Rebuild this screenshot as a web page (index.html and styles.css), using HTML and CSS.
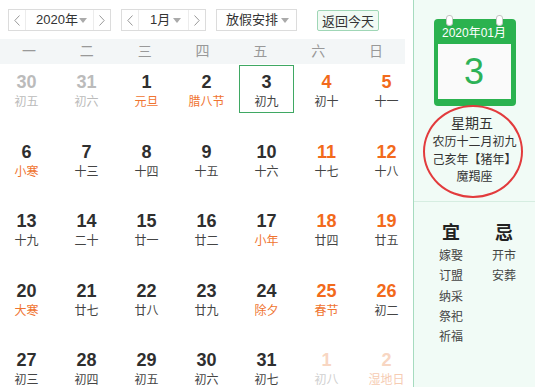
FILE: index.html
```html
<!DOCTYPE html>
<html lang="zh-CN">
<head>
    <meta charset="UTF-8">
    <meta name="viewport" content="width=device-width, initial-scale=1.0">
    <title>万年历</title>
    <link rel="stylesheet" href="styles.css">
</head>
<body>
    <div class="page">
        <div class="main">
            <div class="toolbar">
                <div class="picker year">
                    <span class="arrow prev"><svg width="6" height="11" viewBox="0 0 6 11"><polyline points="5.5,0.5 0.8,5.5 5.5,10.5" fill="none" stroke="#999" stroke-width="1"/></svg></span>
                    <span class="label">2020年<i class="caret"></i></span>
                    <span class="arrow next"><svg width="6" height="11" viewBox="0 0 6 11"><polyline points="0.5,0.5 5.2,5.5 0.5,10.5" fill="none" stroke="#999" stroke-width="1"/></svg></span>
                </div>
                <div class="picker month">
                    <span class="arrow prev"><svg width="6" height="11" viewBox="0 0 6 11"><polyline points="5.5,0.5 0.8,5.5 5.5,10.5" fill="none" stroke="#999" stroke-width="1"/></svg></span>
                    <span class="label">1月<i class="caret"></i></span>
                    <span class="arrow next"><svg width="6" height="11" viewBox="0 0 6 11"><polyline points="0.5,0.5 5.2,5.5 0.5,10.5" fill="none" stroke="#999" stroke-width="1"/></svg></span>
                </div>
                <div class="picker holiday">
                    <span class="label">放假安排<i class="caret"></i></span>
                </div>
                <button class="today-btn">返回今天</button>
            </div>

            <div class="weekdays">
                <span>一</span><span>二</span><span>三</span><span>四</span><span>五</span><span>六</span><span>日</span>
            </div>

            <div class="days">
                <div class="day other"><b>30</b><span>初五</span></div>
                <div class="day other"><b>31</b><span>初六</span></div>
                <div class="day"><b>1</b><span class="fest">元旦</span></div>
                <div class="day"><b>2</b><span class="fest">腊八节</span></div>
                <div class="day today"><b>3</b><span>初九</span></div>
                <div class="day weekend"><b>4</b><span>初十</span></div>
                <div class="day weekend"><b>5</b><span>十一</span></div>

                <div class="day"><b>6</b><span class="fest">小寒</span></div>
                <div class="day"><b>7</b><span>十三</span></div>
                <div class="day"><b>8</b><span>十四</span></div>
                <div class="day"><b>9</b><span>十五</span></div>
                <div class="day"><b>10</b><span>十六</span></div>
                <div class="day weekend"><b>11</b><span>十七</span></div>
                <div class="day weekend"><b>12</b><span>十八</span></div>

                <div class="day"><b>13</b><span>十九</span></div>
                <div class="day"><b>14</b><span>二十</span></div>
                <div class="day"><b>15</b><span>廿一</span></div>
                <div class="day"><b>16</b><span>廿二</span></div>
                <div class="day"><b>17</b><span class="fest">小年</span></div>
                <div class="day weekend"><b>18</b><span>廿四</span></div>
                <div class="day weekend"><b>19</b><span>廿五</span></div>

                <div class="day"><b>20</b><span class="fest">大寒</span></div>
                <div class="day"><b>21</b><span>廿七</span></div>
                <div class="day"><b>22</b><span>廿八</span></div>
                <div class="day"><b>23</b><span>廿九</span></div>
                <div class="day"><b>24</b><span class="fest">除夕</span></div>
                <div class="day weekend"><b>25</b><span class="fest">春节</span></div>
                <div class="day weekend"><b>26</b><span>初二</span></div>

                <div class="day"><b>27</b><span>初三</span></div>
                <div class="day"><b>28</b><span>初四</span></div>
                <div class="day"><b>29</b><span>初五</span></div>
                <div class="day"><b>30</b><span>初六</span></div>
                <div class="day"><b>31</b><span>初七</span></div>
                <div class="day next"><b>1</b><span>初八</span></div>
                <div class="day next"><b>2</b><span class="fest">湿地日</span></div>
            </div>
        </div>

        <aside class="side">
            <div class="cal-card">
                <i class="ring left"></i>
                <i class="ring right"></i>
                <div class="cal-head">2020年01月</div>
                <div class="cal-body">3</div>
            </div>
            <div class="info">
                <div class="week">星期五</div>
                <div>农历十二月初九</div>
                <div>己亥年【猪年】</div>
                <div>魔羯座</div>
            </div>
            <div class="mark"></div>
            <div class="fortune">
                <div class="col">
                    <h3>宜</h3>
                    <p>嫁娶</p>
                    <p>订盟</p>
                    <p>纳采</p>
                    <p>祭祀</p>
                    <p>祈福</p>
                </div>
                <div class="col">
                    <h3>忌</h3>
                    <p>开市</p>
                    <p>安葬</p>
                </div>
            </div>
        </aside>
    </div>
</body>
</html>
```

FILE: styles.css
```css
body {
    margin: 0;
    background: #fff;
    color: #333;
    font-family: "Liberation Sans", "Noto Sans CJK SC", sans-serif;
}

.page {
    display: flex;
    height: 387px;
    overflow: hidden;
}

.main {
    width: 413px;
}

/* toolbar */

.toolbar {
    display: flex;
    align-items: center;
    padding: 9px 0 0 8px;
    height: 22px;
}

.picker {
    display: flex;
    height: 20px;
    border: 1px solid #dcdcdc;
    font-size: 13px;
    line-height: 20px;
    color: #333;
}

.arrow {
    width: 16px;
    display: flex;
    align-items: center;
    justify-content: center;
}

.arrow.prev {
    border-right: 1px solid #ececec;
}

.arrow.next {
    border-left: 1px solid #ececec;
}

.label {
    display: flex;
    align-items: center;
    justify-content: space-between;
    box-sizing: border-box;
}

.year .label {
    width: 67px;
    padding: 0 6px 0 10px;
}

.month .label {
    width: 49px;
    padding: 0 7px 0 11px;
}

.month {
    margin-left: 10px;
}

.holiday {
    margin-left: 10px;
}

.holiday .label {
    width: 79px;
    padding: 0 7px 0 9px;
}

.caret {
    width: 0;
    height: 0;
    border-left: 4px solid transparent;
    border-right: 4px solid transparent;
    border-top: 5px solid #aaa;
}

.today-btn {
    margin-left: 20px;
    height: 21px;
    width: 62px;
    padding: 0;
    border: 1px solid #9fd6b6;
    border-radius: 2px;
    background: #f1faf4;
    color: #333;
    font-family: inherit;
    font-size: 13px;
}

/* weekday header */

.weekdays {
    margin-top: 8px;
    width: 405px;
    height: 25px;
    display: grid;
    grid-template-columns: repeat(7, 1fr);
    background: #f3f6f7;
    font-size: 14px;
    line-height: 25px;
    color: #999;
    text-align: center;
}

/* date grid */

.days {
    display: grid;
    grid-template-columns: repeat(7, 55px);
    grid-auto-rows: 69.5px;
    column-gap: 5px;
    margin-left: -1px;
    padding-top: 1px;
}

.day {
    height: 48px;
    box-sizing: border-box;
    border: 1px solid transparent;
    padding-top: 6px;
    text-align: center;
}

.day b {
    display: block;
    font-size: 18px;
    line-height: 20px;
    color: #2f2f2f;
}

.day span {
    display: block;
    margin-top: 3px;
    font-size: 12px;
    line-height: 14px;
    color: #444;
    white-space: nowrap;
}

.day span.fest {
    color: #f07430;
}

.day.weekend b {
    color: #f26a1b;
}

.day.today {
    border-color: #3fa863;
}

.day.other b,
.day.other span {
    color: #bbb;
}

.day.next b {
    color: #f8d6c2;
}

.day.next span {
    color: #d0d0d0;
}

.day.next span.fest {
    color: #f6ccb3;
}

/* side panel */

.side {
    position: relative;
    width: 121px;
    border-left: 1px solid #a6dbbf;
    background: #f1fbf6;
}

.cal-card {
    position: relative;
    width: 82px;
    height: 87px;
    margin: 19px auto 0;
    padding: 0 5px 7px 4px;
    box-sizing: border-box;
    border-radius: 4px;
    background: #2bb24f;
}

.ring {
    position: absolute;
    top: -4px;
    width: 5px;
    height: 9px;
    border: 1px solid #c4c4c4;
    border-radius: 3px;
    background: #fff;
}

.ring.left {
    left: 12px;
}

.ring.right {
    left: 62px;
}

.cal-head {
    height: 25px;
    padding-top: 7px;
    box-sizing: border-box;
    font-size: 12px;
    line-height: 14px;
    color: #fff;
    text-align: center;
}

.cal-body {
    height: 55px;
    background: #fafafa;
    font-size: 36px;
    line-height: 55px;
    color: #2db257;
    text-align: center;
}

.info {
    height: 96px;
    box-sizing: border-box;
    padding-top: 7px;
    border-bottom: 1px solid #d6ede1;
    font-size: 12px;
    line-height: 17.5px;
    color: #333;
    text-align: center;
}

.info .week {
    font-size: 14px;
    line-height: 20px;
    margin-bottom: 1px;
    margin-right: 5px;
}

.mark {
    position: absolute;
    left: 9px;
    top: 105px;
    width: 96px;
    height: 89px;
    border: 2px solid #e23b3d;
    border-radius: 50%;
}

.fortune {
    display: flex;
    gap: 13px;
    padding: 20px 0 0 17px;
}

.col {
    width: 40px;
    text-align: center;
}

.col h3 {
    margin: 0 0 2px;
    font-size: 18px;
    line-height: 22px;
    color: #222;
}

.col p {
    margin: 0;
    font-size: 12px;
    line-height: 20.25px;
    color: #444;
}
```
